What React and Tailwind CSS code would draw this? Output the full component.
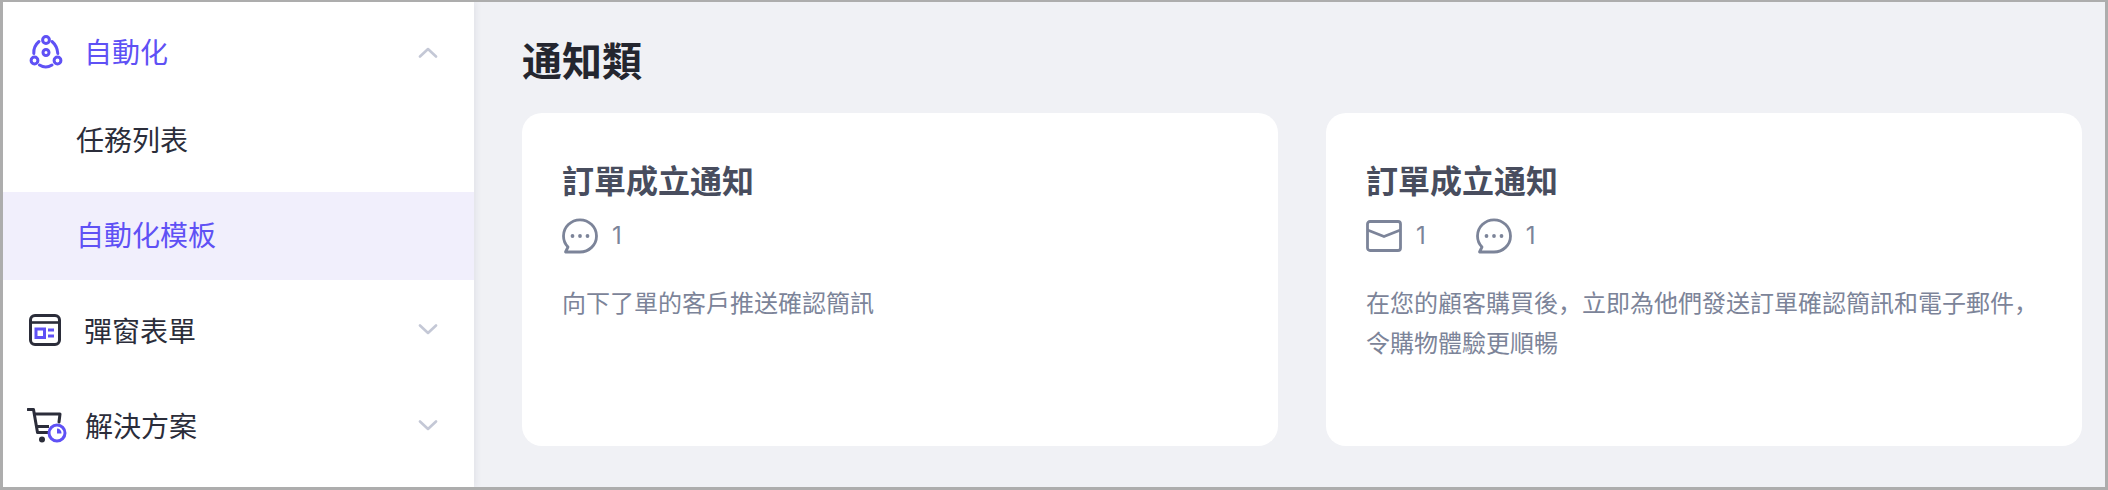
const font = { fontFamily: '"Noto Sans CJK SC", "Noto Sans CJK TC", sans-serif' };

function Chevron({ up }) {
  return (
    <svg width="20" height="12" viewBox="0 0 20 12" fill="none" className="shrink-0">
      <path d={up ? "M2 10.5 L10 3 L18 10.5" : "M2 1.5 L10 9 L18 1.5"} stroke="#c4c8d6" strokeWidth="2.6" strokeLinecap="round" strokeLinejoin="round" />
    </svg>
  );
}

function AutoIcon() {
  return (
    <svg width="34" height="34" viewBox="0 0 34 34" fill="none" stroke="#5f51f5" strokeWidth="3" strokeLinecap="round">
      <circle cx="17" cy="5" r="3.4" />
      <circle cx="17" cy="17.5" r="3" />
      <circle cx="5.5" cy="25.5" r="3.4" />
      <circle cx="28.5" cy="25.5" r="3.4" />
      <path d="M10 6.5 C6.5 9.5 4.5 14 4.8 18.5" />
      <path d="M23 6.5 C26.5 9.5 28.5 14 28.8 18.5" />
      <path d="M10.5 30 C14.5 32.5 19 32.5 23 30" />
    </svg>
  );
}

function FormIcon() {
  return (
    <svg width="32" height="32" viewBox="0 0 32 32" fill="none">
      <rect x="1.5" y="1.5" width="29" height="29" rx="4.5" stroke="#2b2d3a" strokeWidth="3" />
      <path d="M1.5 8.5 H30.5" stroke="#2b2d3a" strokeWidth="2.6" />
      <rect x="7" y="15" width="8.5" height="8.5" stroke="#5f51f5" strokeWidth="3" />
      <path d="M19 16 H25 M19 22 H25" stroke="#5f51f5" strokeWidth="3" />
    </svg>
  );
}

function CartIcon() {
  return (
    <svg width="40" height="36" viewBox="0 0 40 36" fill="none">
      <path d="M1 1.5 H6.5 L10.5 24.5 H21" stroke="#2b2d3a" strokeWidth="3" strokeLinecap="round" strokeLinejoin="round" />
      <path d="M7.5 6 H33 L32 14" stroke="#2b2d3a" strokeWidth="3" strokeLinecap="round" strokeLinejoin="round" />
      <path d="M9.5 18.5 H22" stroke="#2b2d3a" strokeWidth="3" />
      <circle cx="15" cy="31.5" r="3" fill="#2b2d3a" />
      <circle cx="30" cy="25" r="8" fill="#fff" stroke="#5f51f5" strokeWidth="3" />
      <path d="M30 20.5 V25.5 H34.5 A4.5 4.5 0 0 0 30 20.5 Z" fill="#5f51f5" />
    </svg>
  );
}

function ChatIcon() {
  return (
    <svg width="36" height="36" viewBox="0 0 36 36" fill="none">
      <path d="M3.5 34 H18 C27 34 34.5 27 34.5 18 C34.5 9 27 1.8 18 1.8 C9 1.8 1.5 9 1.5 18 C1.5 22.5 3.2 26.2 6 29 L3.5 34 Z" stroke="#7c8499" strokeWidth="2.8" strokeLinejoin="round" />
      <circle cx="10.5" cy="18" r="1.9" fill="#7c8499" />
      <circle cx="18" cy="18" r="1.9" fill="#7c8499" />
      <circle cx="25.5" cy="18" r="1.9" fill="#7c8499" />
    </svg>
  );
}

function MailIcon() {
  return (
    <svg width="36" height="32" viewBox="0 0 36 32" fill="none">
      <rect x="1.5" y="1.5" width="33" height="29" rx="2.5" stroke="#7c8499" strokeWidth="2.8" />
      <path d="M1.5 10 L18 16.5 L34.5 10" stroke="#7c8499" strokeWidth="2.8" strokeLinejoin="round" />
    </svg>
  );
}

function MenuRow({ icon, label, active, up, className, iconClass = "w-[55px]", textClass = "" }) {
  return (
    <div className={`flex h-[88px] items-center pl-[26px] pr-[36px] ${className}`}>
      <div className={`flex shrink-0 items-center ${iconClass}`}>{icon}</div>
      <span className={`flex-1 text-[28px] leading-[40px] ${textClass} ${active ? "text-[#5f51f5]" : "text-[#2b2d3a]"}`}>{label}</span>
      <Chevron up={up} />
    </div>
  );
}

function Card({ badges, desc }) {
  return (
    <div className="h-[333px] flex-1 rounded-[20px] bg-white px-10 pt-[44px]">
      <h3 className="text-[32px] leading-[44px] font-bold text-[#484d5e]">訂單成立通知</h3>
      <div className="mt-[17px] flex h-9 items-center gap-[50px]">
        {badges.map((b, i) => (
          <div key={i} className="flex items-center gap-[14px]">
            {b === "mail" ? <MailIcon /> : <ChatIcon />}
            <span className="text-2xl leading-9 text-[#7c8499]" style={{ fontFamily: '"Inter", sans-serif' }}>1</span>
          </div>
        ))}
      </div>
      <p className="mt-[28px] text-2xl leading-10 text-[#7c8499]">{desc}</p>
    </div>
  );
}

export default function App() {
  return (
    <div className="flex h-[490px] w-full overflow-hidden border-x-[3px] border-t-2 border-b-[3px] border-[#adadad] bg-[#f0f1f5]" style={font}>
      <aside className="h-full w-[471px] shrink-0 bg-white pt-[6px] shadow-[2px_0_6px_rgba(60,65,90,0.08)]">
        <MenuRow icon={<AutoIcon />} label="自動化" active up textClass="pb-[3px]" />
        <div className="flex h-[88px] items-center pb-[3px] pl-[73px] text-[28px] text-[#2b2d3a]">任務列表</div>
        <div className="mt-2 flex h-[88px] items-center bg-[#f1effc] pb-[4px] pl-[73px] text-[28px] text-[#5f51f5]">自動化模板</div>
        <MenuRow icon={<FormIcon />} label="彈窗表單" className="mt-[6px]" />
        <MenuRow icon={<CartIcon />} label="解決方案" className="mt-2" iconClass="-ml-[2px] w-[58px]" textClass="pb-[2px]" />
      </aside>
      <main className="min-w-0 flex-1 pt-[29px] pr-[23px] pl-[48px]">
        <h2 className="text-[40px] leading-[56px] font-bold text-[#24262f]">通知類</h2>
        <div className="mt-[26px] flex gap-[48px]">
          <Card badges={["chat"]} desc="向下了單的客戶推送確認簡訊" />
          <Card badges={["mail", "chat"]} desc="在您的顧客購買後，立即為他們發送訂單確認簡訊和電子郵件，令購物體驗更順暢" />
        </div>
      </main>
    </div>
  );
}
